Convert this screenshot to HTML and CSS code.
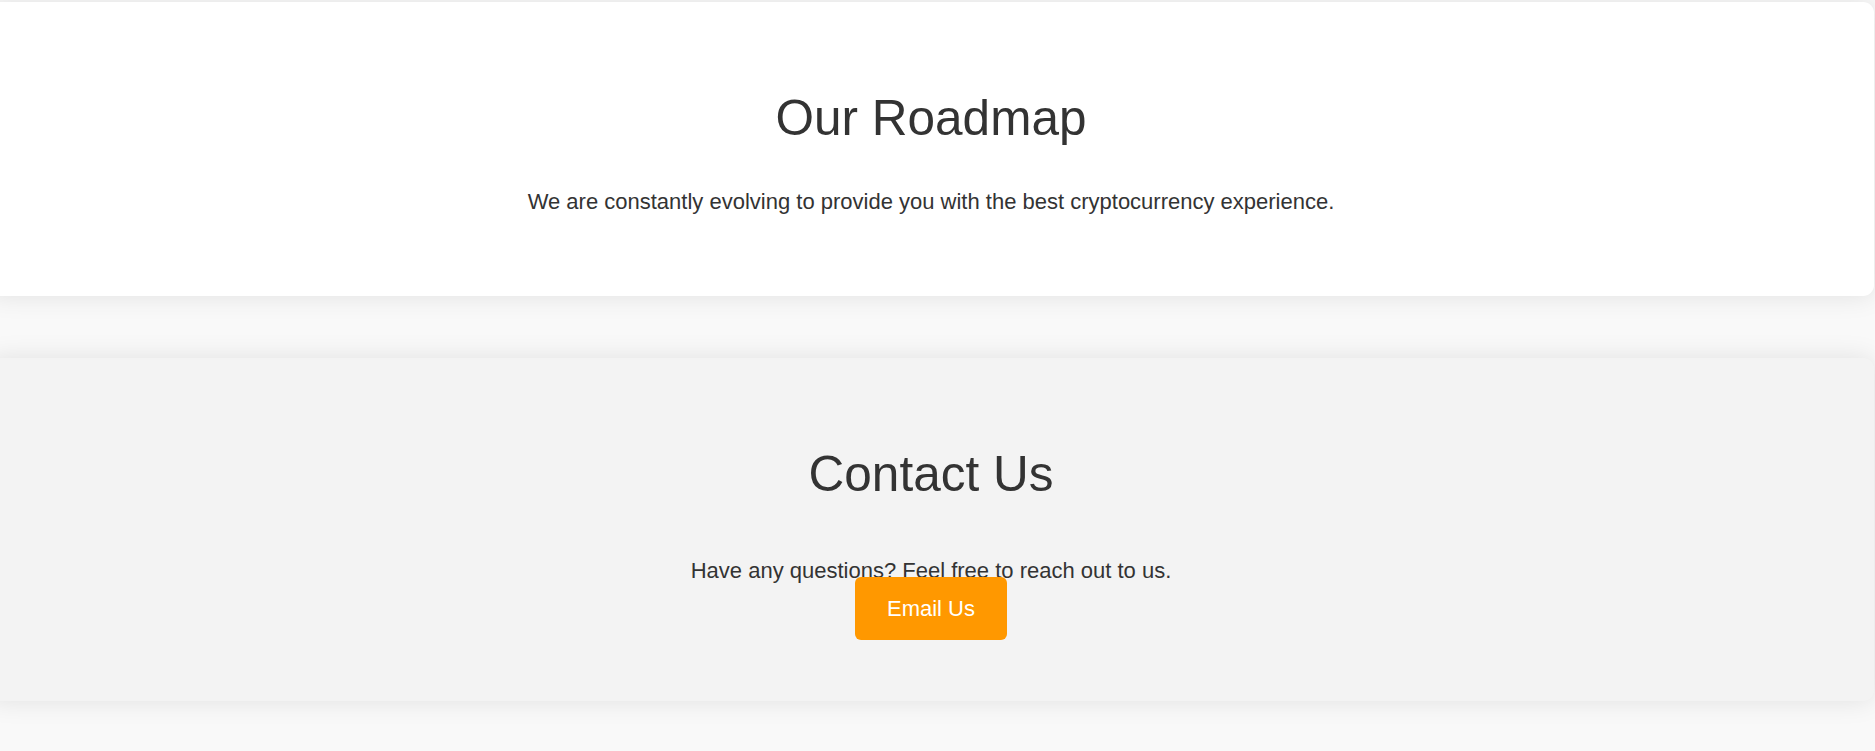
FILE: index.html
```html
<!DOCTYPE html>
<html lang="en">
<head>
<meta charset="utf-8">
<title>Roadmap</title>
<link rel="stylesheet" href="styles.css">
</head>
<body>
<main class="page">
  <section class="panel roadmap">
    <h2 class="panel-title">Our Roadmap</h2>
    <p class="panel-text">We are constantly evolving to provide you with the best cryptocurrency experience.</p>
  </section>
  <section class="panel contact">
    <h2 class="panel-title">Contact Us</h2>
    <p class="panel-text contact-text">Have any questions? Feel free to reach out to us.</p>
    <a class="btn" href="#">Email Us</a>
  </section>
</main>
</body>
</html>
```

FILE: styles.css
```css
html, body {
  margin: 0;
  padding: 0;
}
html {
  background: #f9f9f9;
}
body {
  font-family: "Liberation Sans", Arial, sans-serif;
  color: #333;
}
.page {
  display: flex;
  flex-direction: column;
  gap: 62px;
  padding: 2px 0 40px;
  margin: 0 1px 0 -12px;
}
.panel {
  background: #fff;
  border-radius: 11px;
  box-shadow: 0 0 27px rgba(0, 0, 0, 0.1);
  text-align: center;
  padding: 87px 20px 82px;
  display: flex;
  flex-direction: column;
  align-items: center;
}
.contact {
  background: #f3f3f3;
  padding-bottom: 61px;
}
.panel-title {
  margin: 0;
  font-size: 49.5px;
  line-height: 57px;
  font-weight: 400;
  color: #333;
}
.panel-text {
  margin: 42.5px 0 0;
  font-size: 22px;
  line-height: 25px;
  color: #333;
}
.contact-text {
  margin-top: 56px;
}
.btn {
  display: inline-block;
  margin-top: -6px;
  padding: 19px 32px;
  background: #ff9800;
  color: #fff;
  font-size: 22px;
  line-height: 25px;
  text-decoration: none;
  border-radius: 6px;
}
```
